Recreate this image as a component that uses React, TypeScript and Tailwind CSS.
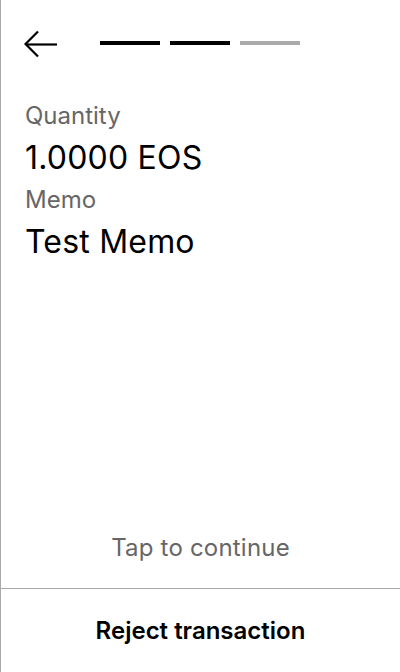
import React from 'react';

const steps = ['bg-black', 'bg-black', 'bg-[#aaaaaa]'];

const BackArrow: React.FC = () => (
  <svg width="34" height="28" viewBox="0 0 34 28" fill="none" stroke="black" strokeWidth="2.2">
    <path d="M33 14.5H2" />
    <path d="M14 1.5L1.5 14L14 26.5" />
  </svg>
);

const App: React.FC = () => {
  return (
    <div
      className="h-[672px] w-[400px] flex flex-col bg-white border-l border-[#aaaaaa] text-black"
      style={{ fontFamily: 'Inter, "Noto Sans", sans-serif' }}
    >
      <div className="flex items-center pl-[23px] pt-[30px] h-[57px]">
        <BackArrow />
        <div className="flex gap-[10px] ml-[42px] mb-[2px]">
          {steps.map((c, i) => (
            <div key={i} className={`w-[60px] h-[4px] ${c}`} />
          ))}
        </div>
      </div>

      <div className="px-6 pt-[41px]">
        <p className="text-[24px] leading-[36px] text-[#666666]">Quantity</p>
        <p className="text-[32px] leading-[48px] tracking-[0.2px]">1.0000 EOS</p>
        <p className="text-[24px] leading-[36px] text-[#666666]">Memo</p>
        <p className="text-[32px] leading-[48px] tracking-[0.2px]">Test Memo</p>
      </div>

      <div className="flex-1" />

      <p className="text-center text-[24px] leading-[32px] text-[#666666] mb-[24px] tracking-[0.2px]">Tap to continue</p>

      <div className="border-t border-[#aaaaaa] h-[84px] flex items-center justify-center">
        <span className="text-[24px] font-semibold">Reject transaction</span>
      </div>
    </div>
  );
};

export default App;
